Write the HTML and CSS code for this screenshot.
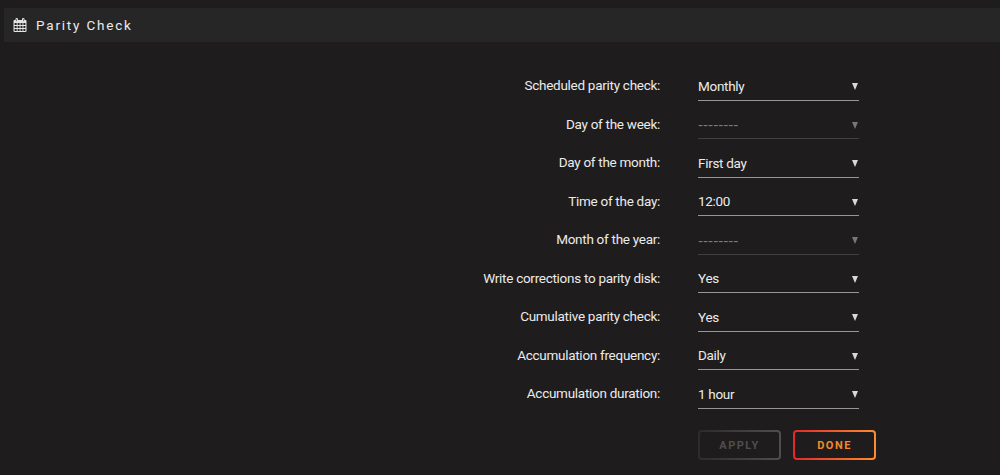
FILE: index.html
```
<!DOCTYPE html>
<html lang="en">
	<head>
		<meta charset="utf-8">
		<title>Parity Check</title>
		<link rel="stylesheet" href="styles.css">
	</head>
	<body>
		<div class="title">
			<svg class="icon" viewBox="0 0 13 14">
				<path fill="#e4e4e6" fill-rule="evenodd" d="M1 2H2V1Q2 0 3.200 0T4.500 1V2H8.500V1Q8.500 0 9.800 0T11 1V2H12Q13 2 13 3V13Q13 14 12 14H1Q0 14 0 13V3Q0 2 1 2ZM1.100 5V7H3.200V5ZM4.100 5V7H6.100V5ZM7 5V7H9V5ZM9.900 5V7H11.900V5ZM1.100 8V10H3.200V8ZM4.100 8V10H6.100V8ZM7 8V10H9V8ZM9.900 8V10H11.900V8ZM1.100 11V12.900H3.200V11ZM4.100 11V12.900H6.100V11ZM7 11V12.900H9V11ZM9.900 11V12.900H11.900V11ZM3 1V3.300H3.500V1ZM9.500 1V3.300H10V1Z"/>
			</svg>
			<span class="title-text">Parity Check</span>
		</div>
		<form class="settings">
			<div class="row">
				<label class="label">Scheduled parity check:</label>
				<div class="field"><select><option>Monthly</option></select></div>
			</div>
			<div class="row">
				<label class="label">Day of the week:</label>
				<div class="field disabled"><select disabled><option>--------</option></select></div>
			</div>
			<div class="row">
				<label class="label">Day of the month:</label>
				<div class="field"><select><option>First day</option></select></div>
			</div>
			<div class="row">
				<label class="label">Time of the day:</label>
				<div class="field"><select><option>12:00</option></select></div>
			</div>
			<div class="row">
				<label class="label">Month of the year:</label>
				<div class="field disabled"><select disabled><option>--------</option></select></div>
			</div>
			<div class="row">
				<label class="label">Write corrections to parity disk:</label>
				<div class="field"><select><option>Yes</option></select></div>
			</div>
			<div class="row">
				<label class="label">Cumulative parity check:</label>
				<div class="field"><select><option>Yes</option></select></div>
			</div>
			<div class="row">
				<label class="label">Accumulation frequency:</label>
				<div class="field"><select><option>Daily</option></select></div>
			</div>
			<div class="row">
				<label class="label">Accumulation duration:</label>
				<div class="field"><select><option>1 hour</option></select></div>
			</div>
			<div class="buttons">
				<button class="btn apply" type="button" disabled>APPLY</button>
				<button class="btn done" type="button">DONE</button>
			</div>
		</form>
	</body>
</html>
```
FILE: styles.css
```
*{
	box-sizing: border-box;
}
body{
	margin: 0;
	height: 475px;
	overflow: hidden;
	background-color: #1e1c1c;
	color: #ebebeb;
	font-family: Roboto, sans-serif;
	font-size: 13.5px;
	letter-spacing: -0.28px;
}
.title{
	display: flex;
	align-items: center;
	height: 34px;
	margin: 8px 0 0 4px;
	padding-left: 9px;
	background-color: #262626;
}
.icon{
	width: 14px;
	height: 14px;
	margin-right: 9px;
}
.title-text{
	font-size: 13.5px;
	letter-spacing: 1.8px;
}
.settings{
	margin-top: 28px;
}
.row{
	display: flex;
	height: 38.56px;
}
.label{
	width: 660px;
	margin-right: 38px;
	line-height: 31px;
	text-align: right;
	white-space: nowrap;
}
.field{
	position: relative;
	width: 161px;
	height: 30.5px;
	border-bottom: 1px solid #969696;
}
.field select{
	display: block;
	width: 100%;
	height: 31px;
	margin: 0;
	padding: 0;
	border: 0;
	outline: 0;
	background: none;
	color: #ebebeb;
	font: inherit;
	letter-spacing: -0.3px;
	appearance: none;
	-webkit-appearance: none;
}
.field::after{
	content: "";
	position: absolute;
	top: 13px;
	right: 1px;
	border: 3px solid transparent;
	border-top: 7px solid #d8d8d8;
	border-bottom: 0;
}
.disabled{
	border-color: #414040;
}
.field select:disabled{
	padding-top: 2px;
	color: #7c7b7b;
	font-family: "DejaVu Sans", sans-serif;
	font-size: 14px;
	letter-spacing: 0;
	opacity: 1;
}
.disabled::after{
	border-top-color: #777;
}
.buttons{
	display: flex;
	gap: 12px;
	margin: 13px 0 0 698px;
}
.btn{
	width: 83px;
	height: 30px;
	padding: 2px 0 0;
	border: 2px solid transparent;
	border-radius: 4px;
	font-family: Roboto, sans-serif;
	font-size: 11px;
	font-weight: bold;
	letter-spacing: 1.5px;
}
.apply{
	background: linear-gradient(#1e1c1c, #1e1c1c) padding-box, linear-gradient(90deg, #2d2c2c, #4f4e4e) border-box;
	color: #4f4e4e;
}
.done{
	background: linear-gradient(#1e1c1c, #1e1c1c) padding-box, linear-gradient(90deg, #e22828, #ff8c2f) border-box;
	color: #f58a2c;
}
```
